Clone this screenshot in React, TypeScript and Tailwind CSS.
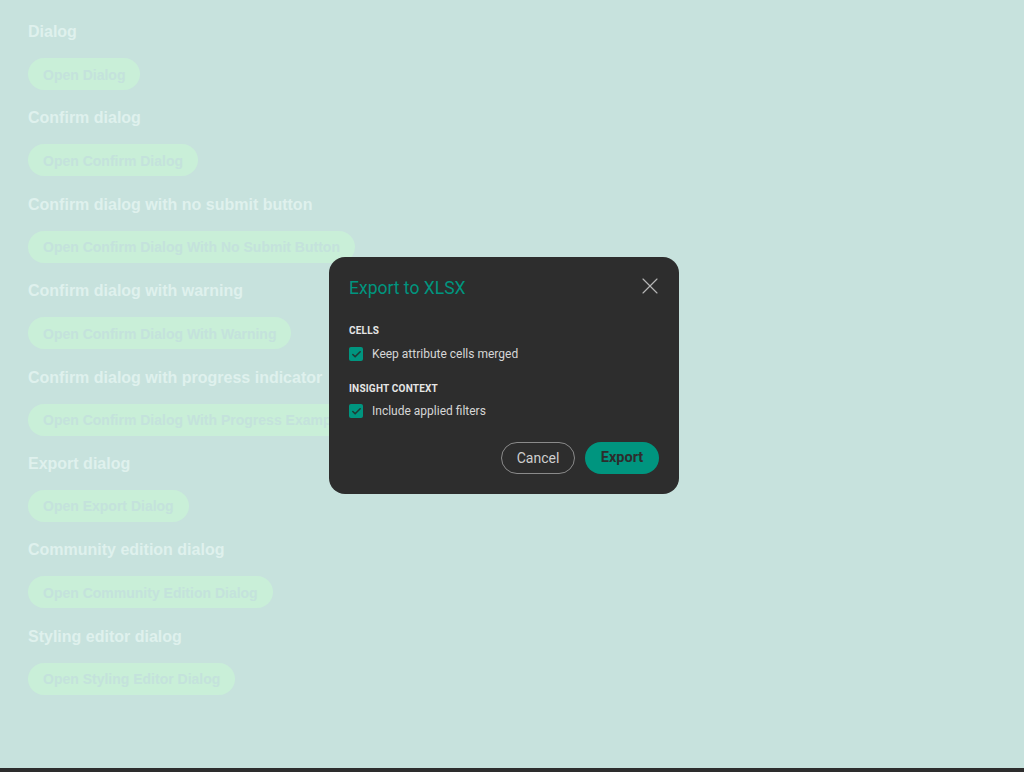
import { X, Check } from 'lucide-react';

const sections = [
  { title: 'Dialog', button: 'Open Dialog' },
  { title: 'Confirm dialog', button: 'Open Confirm Dialog' },
  { title: 'Confirm dialog with no submit button', button: 'Open Confirm Dialog With No Submit Button' },
  { title: 'Confirm dialog with warning', button: 'Open Confirm Dialog With Warning' },
  { title: 'Confirm dialog with progress indicator', button: 'Open Confirm Dialog With Progress Example' },
  { title: 'Export dialog', button: 'Open Export Dialog' },
  { title: 'Community edition dialog', button: 'Open Community Edition Dialog' },
  { title: 'Styling editor dialog', button: 'Open Styling Editor Dialog' },
];

const CheckRow = ({ label }: { label: string }) => (
  <div className="flex items-center gap-[9px]">
    <div className="w-[14px] h-[14px] rounded-[2px] bg-[#00957f] flex items-center justify-center">
      <Check size={11} strokeWidth={3.5} color="#1f3a35" />
    </div>
    <span className="text-[12px] leading-[14px] text-[#d6d6d6]">{label}</span>
  </div>
);

export default function App() {
  return (
    <div className="relative w-[1024px] h-[772px] overflow-hidden bg-[#2d2d2d]" style={{ fontFamily: '"Liberation Sans", Arial, sans-serif' }}>
      <div className="h-[768px] bg-[#c7e2dd] pt-[16px] px-[28px]">
        {sections.map((s) => (
          <div key={s.title} className="flex flex-col items-start gap-[14px] mb-[12.4px]">
            <h3 className="mt-[4px] text-[16px] leading-[24px] font-bold text-[#dff1ed]">{s.title}</h3>
            <button className="h-[32px] pt-[2px] rounded-full bg-[#c9efd8] px-[15px] text-[14px] font-bold text-[#c4e2dc] whitespace-nowrap">
              {s.button}
            </button>
          </div>
        ))}
      </div>

      <div
        className="absolute left-[329px] top-[257px] w-[350px] h-[237px] rounded-[16px] bg-[#2d2d2d] px-[20px] pt-[20px] flex flex-col"
        style={{ fontFamily: 'Roboto, "Liberation Sans", sans-serif' }}
      >
        <div className="flex items-start justify-between h-[22px]">
          <h2 className="text-[17.5px] leading-[22px] text-[#00957f]">Export to XLSX</h2>
          <button className="-mt-[5px] -mr-[5px] h-[28px] text-[#b5b5b5]">
            <X size={28} strokeWidth={1} />
          </button>
        </div>

        <div className="mt-[26px] text-[10px] leading-[12px] font-bold tracking-[0.2px] text-[#e6e6e6]">CELLS</div>
        <div className="mt-[10px]">
          <CheckRow label="Keep attribute cells merged" />
        </div>

        <div className="mt-[22px] text-[10px] leading-[12px] font-bold tracking-[0.2px] text-[#e6e6e6]">INSIGHT CONTEXT</div>
        <div className="mt-[9px]">
          <CheckRow label="Include applied filters" />
        </div>

        <div className="mt-[24px] flex justify-end gap-[10px]">
          <button className="h-[32px] w-[74px] rounded-full border border-[#8a8a8a] text-[14px] text-[#cfcfcf]">
            Cancel
          </button>
          <button className="h-[32px] w-[74px] rounded-full bg-[#00957f] text-[14.5px] font-bold text-[#2d2d2d]">
            Export
          </button>
        </div>
      </div>
    </div>
  );
}
